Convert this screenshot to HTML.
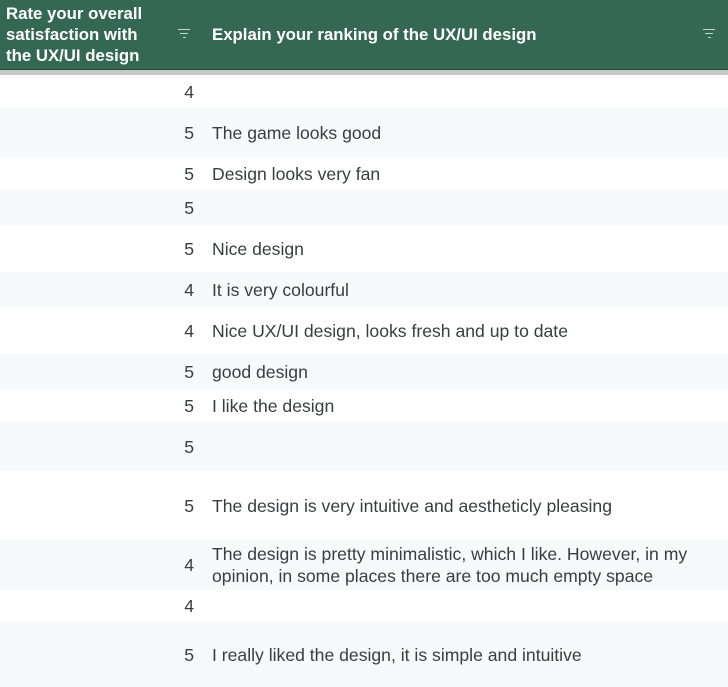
<!DOCTYPE html>
<html><head><style>
body{margin:0;width:728px;height:687px;overflow:hidden;background:#fff;font-family:"Liberation Sans",sans-serif;}
.hd{position:absolute;left:0;top:0;width:728px;height:69px;background:#356854;border-bottom:1px solid #24483a;color:#fff;font-weight:bold;font-size:16.8px;}
.h1{position:absolute;left:6px;top:3px;line-height:21px;width:150px;}
.h2{position:absolute;left:212px;top:24px;line-height:21px;}
.f{position:absolute;top:29px;width:12px;}
.f i{display:block;height:1px;background:#c9d6d0;margin:0 auto 3px;}
.band{position:absolute;left:0;top:70px;width:728px;height:5px;background:#c8c8c8;}
.r{position:absolute;left:0;width:728px;display:flex;align-items:center;color:#3a3d40;font-size:17.6px;line-height:22px;}
.r.g{background:#f8f9fa;}
.n{width:194px;text-align:right;flex:none;}
.t{margin-left:18px;}
</style></head><body>
<div class="hd">
<div class="h1">Rate your overall satisfaction with the UX/UI design</div>
<div class="f" style="left:178px"><i style="width:12px"></i><i style="width:8px"></i><i style="width:3px"></i></div>
<div class="h2">Explain your ranking of the UX/UI design</div>
<div class="f" style="left:703px"><i style="width:12px"></i><i style="width:8px"></i><i style="width:3px"></i></div>
</div>
<div class="band"></div>
<div class="r" style="top:75px;height:33px"><span class="n">4</span></div>
<div class="r g" style="top:108px;height:49px"><span class="n">5</span><span class="t">The game looks good</span></div>
<div class="r" style="top:157px;height:33px"><span class="n">5</span><span class="t">Design looks very fan</span></div>
<div class="r g" style="top:190px;height:35px"><span class="n">5</span></div>
<div class="r" style="top:225px;height:47px"><span class="n">5</span><span class="t">Nice design</span></div>
<div class="r g" style="top:272px;height:35px"><span class="n">4</span><span class="t">It is very colourful</span></div>
<div class="r" style="top:307px;height:47px"><span class="n">4</span><span class="t">Nice UX/UI design, looks fresh and up to date</span></div>
<div class="r g" style="top:354px;height:35px"><span class="n">5</span><span class="t">good design</span></div>
<div class="r" style="top:389px;height:33px"><span class="n">5</span><span class="t">I like the design</span></div>
<div class="r g" style="top:422px;height:49px"><span class="n">5</span></div>
<div class="r" style="top:471px;height:69px"><span class="n">5</span><span class="t">The design is very intuitive and aestheticly pleasing</span></div>
<div class="r g" style="top:540px;height:50px"><span class="n">4</span><span class="t" style="width:500px">The design is pretty minimalistic, which I like. However, in my opinion, in some places there are too much empty space</span></div>
<div class="r" style="top:590px;height:32px"><span class="n">4</span></div>
<div class="r g" style="top:622px;height:65px"><span class="n">5</span><span class="t">I really liked the design, it is simple and intuitive</span></div>
</body></html>
